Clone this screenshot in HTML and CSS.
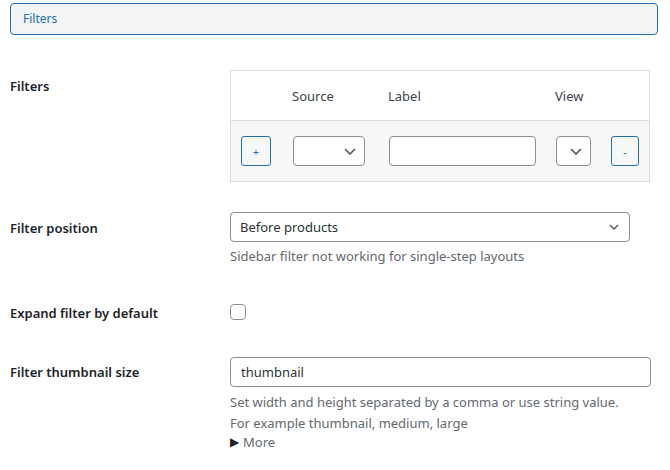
FILE: index.html
```html
<!DOCTYPE html>
<html>
<head>
<meta charset="utf-8">
<link rel="stylesheet" href="styles.css">
</head>
<body>
<div class="page">
  <div class="tab">Filters</div>

  <div class="row row-filters">
    <div class="label label-top">Filters</div>
    <div class="ftable">
      <div class="fhead">
        <div class="cell first"></div>
        <div class="cell">Source</div>
        <div class="cell">Label</div>
        <div class="cell">View</div>
        <div class="cell"></div>
      </div>
      <div class="fbody">
        <div class="cell first"><button class="btn btn-add">+</button></div>
        <div class="cell"><div class="select sel-source"><svg class="chev-lg" viewBox="0 0 12 7"><path d="M1 1l5 5 5-5" fill="none" stroke="#50575e" stroke-width="1.6"/></svg></div></div>
        <div class="cell"><div class="input input-label"></div></div>
        <div class="cell"><div class="select sel-view"><svg class="chev-lg" viewBox="0 0 12 7"><path d="M1 1l5 5 5-5" fill="none" stroke="#50575e" stroke-width="1.6"/></svg></div></div>
        <div class="cell"><button class="btn btn-del">-</button></div>
      </div>
    </div>
  </div>

  <div class="row row-position">
    <div class="label">Filter position</div>
    <div class="field">
      <div class="select sel-position"><span>Before products</span><svg class="chev-sm" viewBox="0 0 10 6"><path d="M1 1l4 4 4-4" fill="none" stroke="#50575e" stroke-width="1.4"/></svg></div>
      <p class="desc desc-pos">Sidebar filter not working for single-step layouts</p>
    </div>
  </div>

  <div class="row row-expand">
    <div class="label">Expand filter by default</div>
    <div class="field"><span class="checkbox"></span></div>
  </div>

  <div class="row row-thumb">
    <div class="label">Filter thumbnail size</div>
    <div class="field">
      <div class="input input-thumb">thumbnail</div>
      <p class="desc desc-l1">Set width and height separated by a comma or use string value.</p>
      <p class="desc desc-l2">For example thumbnail, medium, large</p>
      <p class="desc more"><span class="tri">&#9654;</span>More</p>
    </div>
  </div>
</div>
</body>
</html>
```

FILE: styles.css
```css
* { box-sizing: border-box; }
html, body { margin: 0; padding: 0; background: #fff; }
body {
  font-family: "Noto Sans", "Open Sans", sans-serif;
  font-size: 13px;
  color: #1d2327;
}
.page { padding: 3px 12px 0 10px; width: 670px; }

.tab {
  height: 32px;
  border: 1px solid #2271b1;
  border-radius: 4px;
  background: #f3f4f5;
  color: #2271b1;
  font-size: 12px;
  line-height: 30px;
  padding-left: 12px;
}

.row {
  display: grid;
  grid-template-columns: 220px 420px;
  align-items: start;
}
.label {
  font-weight: 600;
  font-size: 13px;
  line-height: 20px;
}
.label-top { padding-top: 6px; }

.row-filters { margin-top: 35px; }
.ftable {
  border: 1px solid #dcdcde;
  width: 420px;
}
.fhead, .fbody {
  display: grid;
  grid-template-columns: 62px 96px 167px 55px 1fr;
}
.fhead {
  height: 50px;
  border-bottom: 1px solid #dcdcde;
  align-items: center;
  padding-top: 1px;
  color: #3c434a;
  font-size: 13px;
}
.fhead .cell { margin-left: -1px; }
.fbody {
  background: #f6f7f7;
  padding: 15px 0 15px 0;
  height: 60px;
}
.cell.first { padding-left: 10px; }

.btn {
  height: 30px;
  border: 1px solid #2271b1;
  border-radius: 3px;
  background: #f6f7f7;
  color: #2271b1;
  font-family: inherit;
  font-size: 11px;
  padding: 0;
  display: block;
}
.btn-add { width: 30px; }
.btn-del { width: 28px; }

.select, .input {
  height: 30px;
  border: 1px solid #8c8f94;
  border-radius: 4px;
  background: #fff;
}
.select {
  display: flex;
  align-items: center;
  justify-content: flex-end;
  padding-right: 8px;
}
.sel-source { width: 72px; }
.sel-view { width: 35px; }
.input-label { width: 147px; }
.chev-lg { width: 12px; height: 7px; display: block; }
.chev-sm { width: 10px; height: 6px; display: block; }

.row-position { margin-top: 30px; }
.row-position .label { padding-top: 6px; }
.sel-position {
  width: 400px;
  justify-content: space-between;
  padding: 0 10px 0 9px;
  font-size: 13px;
  color: #2c3338;
}

.desc {
  margin: 0;
  color: #646970;
  font-size: 13px;
  line-height: 20px;
}
.desc-pos { margin-top: 4px; }

.row-expand { margin-top: 38px; }
.row-expand .label { margin-top: -1px; }
.checkbox {
  display: block;
  width: 16px;
  height: 16px;
  border: 1px solid #8c8f94;
  border-radius: 4px;
  background: #fff;
}

.row-thumb { margin-top: 34px; }
.row-thumb .label { padding-top: 5px; }
.input-thumb {
  width: 421px;
  padding-left: 10px;
  line-height: 28px;
  font-size: 13px;
  color: #2c3338;
}
.desc-l1 { margin-top: 5px; }
.desc-l2 { margin-top: 1px; }
.more { margin-top: -1px; }
.tri { font-size: 12px; margin-right: 4px; color: #1d2327; position: relative; top: -1px; }
```
